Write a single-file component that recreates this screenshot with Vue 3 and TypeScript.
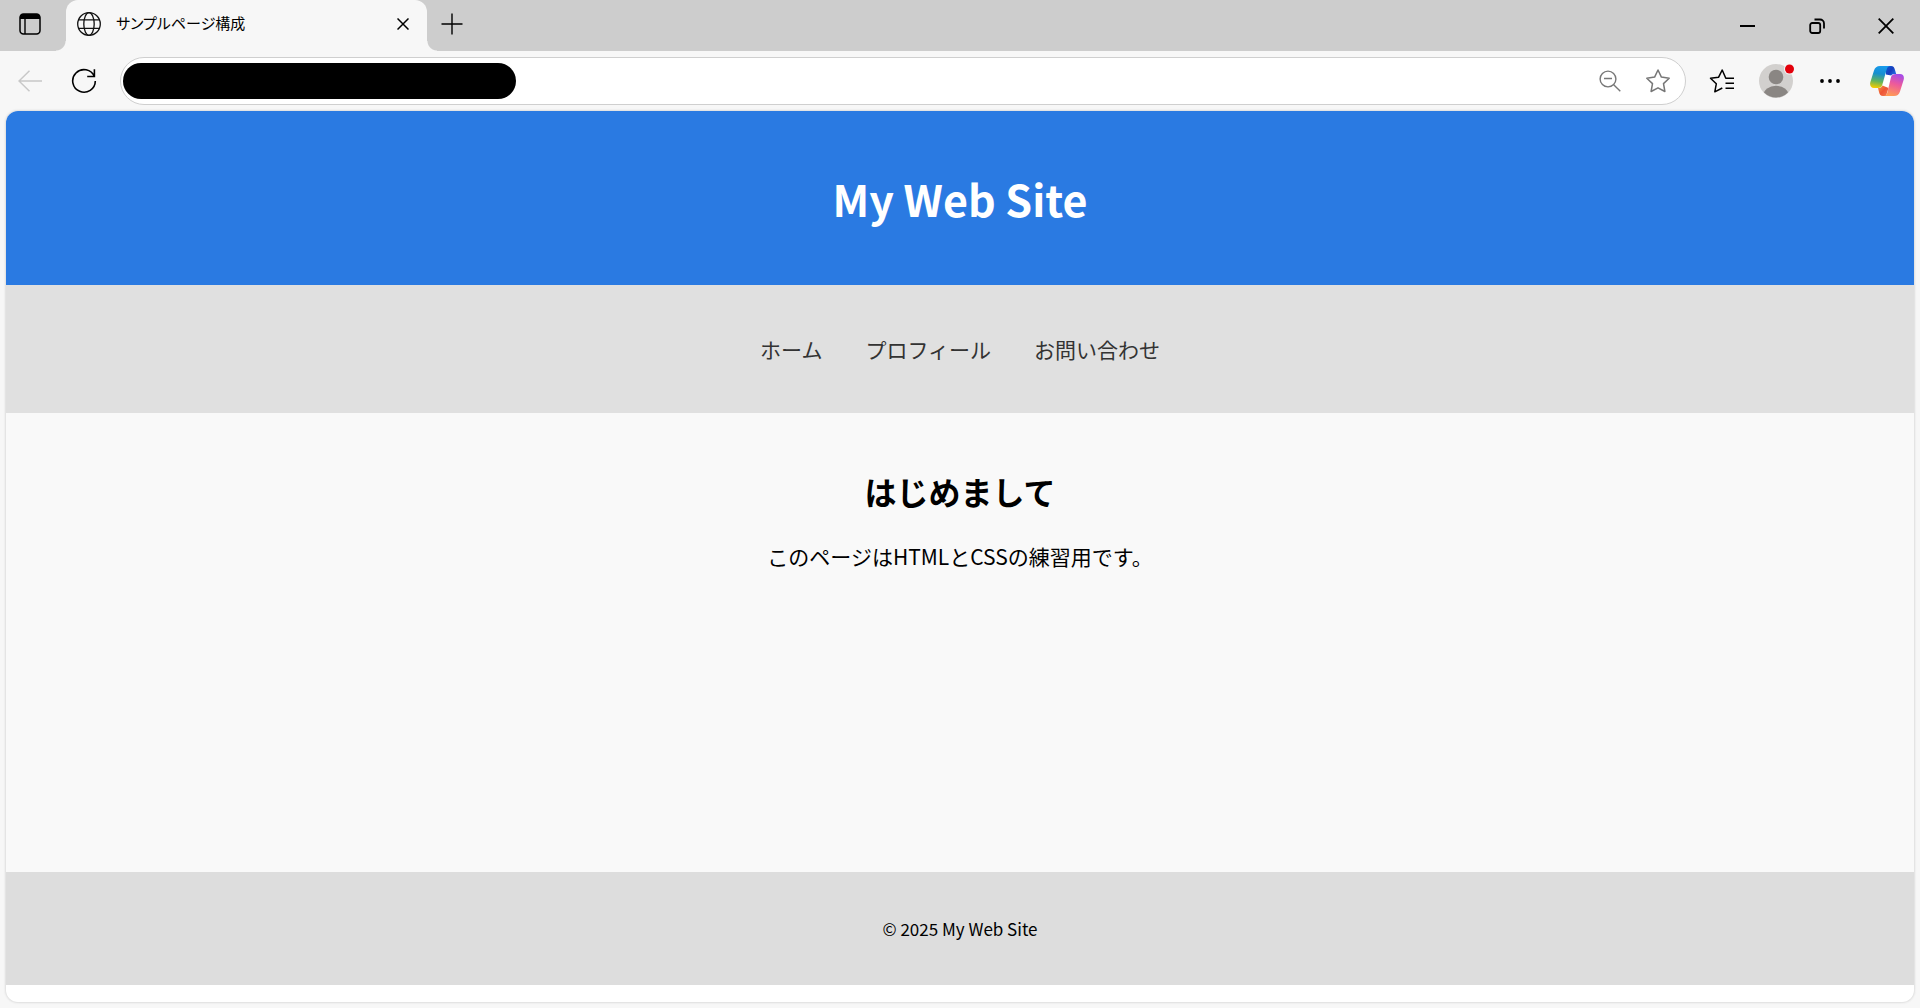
<script setup lang="ts">
import { ref } from 'vue'

interface NavItem {
  label: string
  href: string
}

const tabTitle = 'サンプルページ構成'
const siteName = 'My Web Site'
const address = ref('')
const navItems: NavItem[] = [
  { label: 'ホーム', href: '#home' },
  { label: 'プロフィール', href: '#profile' },
  { label: 'お問い合わせ', href: '#contact' },
]
</script>

<template>
  <div class="window">
    <div class="tab-strip">
      <button class="tab-actions" type="button" aria-label="タブ操作メニュー">
        <svg width="22" height="22" viewBox="0 0 22 22">
          <rect x="1" y="1" width="20" height="20" rx="3.5" fill="none" stroke="#000" stroke-width="1.5" />
          <path d="M1 6V4a3 3 0 0 1 3-3h14a3 3 0 0 1 3 3v2z" />
          <path d="M6 6v15" stroke="#000" stroke-width="1.4" />
        </svg>
      </button>
      <div class="tab">
        <svg class="globe" width="24" height="24" viewBox="0 0 24 24" fill="none" stroke="#111" stroke-width="1.3">
          <circle cx="12" cy="12" r="11.3" />
          <ellipse cx="12" cy="12" rx="5.2" ry="11.3" />
          <path d="M1.6 7.8h20.8M1.6 16.4h20.8" />
        </svg>
        <span class="tab-title">{{ tabTitle }}</span>
        <button class="tab-close" type="button" aria-label="タブを閉じる">
          <svg width="12" height="12" viewBox="0 0 12 12" stroke="#000" stroke-width="1.5">
            <path d="M0.5 0.5l11 11M11.5 0.5l-11 11" />
          </svg>
        </button>
      </div>
      <button class="new-tab" type="button" aria-label="新しいタブ">
        <svg width="22" height="22" viewBox="0 0 22 22" stroke="#000" stroke-width="1.4">
          <path d="M11 0.5v21M0.5 11h21" />
        </svg>
      </button>
      <div class="window-controls">
        <button type="button" aria-label="最小化">
          <svg width="15" height="16" viewBox="0 0 15 16"><path d="M0 8h15" stroke="#000" stroke-width="2" /></svg>
        </button>
        <button type="button" aria-label="元に戻す">
          <svg width="16" height="16" viewBox="0 0 16 16" fill="none" stroke="#000" stroke-width="1.8">
            <rect x="1.2" y="5" width="10" height="10" rx="2" />
            <path d="M5.5 1.5h5.5a4 4 0 0 1 4 4v5" />
          </svg>
        </button>
        <button type="button" aria-label="閉じる">
          <svg width="16" height="16" viewBox="0 0 16 16" stroke="#000" stroke-width="1.8">
            <path d="M0.7 0.7l14.6 14.6M15.3 0.7L0.7 15.3" />
          </svg>
        </button>
      </div>
    </div>

    <div class="toolbar">
      <button class="tool" type="button" aria-label="戻る" disabled>
        <svg width="24" height="22" viewBox="0 0 24 22" fill="none" stroke="#c8c8c8" stroke-width="1.5">
          <path d="M24 11H1M11.5 0.8L1 11l10.5 10.2" />
        </svg>
      </button>
      <button class="tool" type="button" aria-label="更新">
        <svg width="26" height="26" viewBox="0 0 26 26" fill="none" stroke="#000" stroke-width="1.6">
          <path d="M23.4 8.5A11.3 11.3 0 1 0 24.3 13M23.4 1.3v7.2h-7.2" />
        </svg>
      </button>
      <form class="address-bar" @submit.prevent>
        <span class="address-mask"></span>
        <input v-model="address" class="address-input" type="text" aria-label="アドレス" />
        <button class="tool" type="button" aria-label="ズーム">
          <svg width="22" height="22" viewBox="0 0 22 22" fill="none" stroke="#777" stroke-width="1.4">
            <circle cx="9" cy="9" r="7.9" />
            <path d="M5 8.5h8M14.7 14.7l6.6 6.6" />
          </svg>
        </button>
        <button class="tool" type="button" aria-label="お気に入りに追加">
          <svg width="26" height="26" viewBox="0 0 26 26" fill="none" stroke="#777" stroke-width="1.5" stroke-linejoin="round">
            <path d="M13 2l3.4 7.1 7.8 1.1-5.7 5.4 1.4 7.9L13 19.8l-6.9 3.7 1.4-7.9-5.7-5.4 7.8-1.1z" />
          </svg>
        </button>
      </form>
      <button class="tool" type="button" aria-label="お気に入り">
        <svg width="26" height="26" viewBox="0 0 26 26" fill="none" stroke="#000" stroke-width="1.5" stroke-linejoin="round">
          <path d="M25 10.2h-8.2L13.2 2 9.5 9.3 1.5 10.2l5.8 5.6-1.5 8 7.5-3.8M16.5 15.2H25M16.5 20.2H25" />
        </svg>
      </button>
      <button class="tool" type="button" aria-label="プロフィール">
        <svg width="36" height="36" viewBox="0 0 36 36">
          <defs><clipPath id="avatar"><circle cx="18" cy="18" r="16.5" /></clipPath></defs>
          <circle cx="18" cy="18" r="17" fill="#d2d0ce" />
          <g clip-path="url(#avatar)" fill="#8a8683">
            <circle cx="18" cy="14" r="7.3" />
            <ellipse cx="18" cy="32" rx="12.5" ry="9.2" />
          </g>
          <circle cx="31.5" cy="6" r="5.5" fill="#f7f7f7" />
          <circle cx="31.5" cy="6" r="4.5" fill="#e3000b" />
        </svg>
      </button>
      <button class="tool" type="button" aria-label="設定など">
        <svg width="20" height="6" viewBox="0 0 20 6">
          <circle cx="2" cy="3" r="1.9" /><circle cx="10" cy="3" r="1.9" /><circle cx="18" cy="3" r="1.9" />
        </svg>
      </button>
      <button class="tool copilot" type="button" aria-label="Copilot">
        <svg width="34" height="30" viewBox="0 0 34 30">
          <defs>
            <linearGradient id="cool" x1="0.5" y1="0" x2="0.35" y2="1">
              <stop offset="0" stop-color="#189bec" /><stop offset="0.35" stop-color="#168fd0" />
              <stop offset="0.7" stop-color="#63b45c" /><stop offset="1" stop-color="#f2cb00" />
            </linearGradient>
            <linearGradient id="warm" x1="0.7" y1="0" x2="0.4" y2="1">
              <stop offset="0" stop-color="#a64be8" /><stop offset="0.45" stop-color="#ed5a9b" />
              <stop offset="1" stop-color="#ff9b55" />
            </linearGradient>
            <linearGradient id="navy" x1="0" y1="0" x2="1" y2="0.6">
              <stop offset="0" stop-color="#0b62da" /><stop offset="0.6" stop-color="#173ebd" />
              <stop offset="1" stop-color="#2367df" />
            </linearGradient>
            <linearGradient id="ember" x1="0" y1="0" x2="1" y2="1">
              <stop offset="0" stop-color="#f59a42" /><stop offset="0.5" stop-color="#ee5535" />
              <stop offset="1" stop-color="#f47955" />
            </linearGradient>
          </defs>
          <path d="M16 8h8l-6 14h-6z" fill="#fff" />
          <path d="M15 0h6c2.6 0 3.3 1.5 4 4l1.2 4c-3 0-4.200.3-5 1.5L16 8.500z" fill="url(#navy)" />
          <path d="M8 22c2.500 0 3.700-.6 4.500-2.500L18.500 22 16 30h-3c-2.500 0-3.300-1.500-4-4z" fill="url(#ember)" />
          <path d="M10 0h11c-3 0-3.800 1.500-4.500 4l-4.300 15c-.7 2.200-2 3-4.200 3H4c-3.200 0-4.600-2.500-3.600-6L4 4.500C5 1.500 6.800 0 10 0z" fill="url(#cool)" />
          <path d="M24 30H13c3 0 3.800-1.500 4.500-4l3.300-14c.7-3 2-4 5.200-4h4c3.200 0 4.600 2.500 3.600 6L30 25.500C29 28.500 27.200 30 24 30z" fill="url(#warm)" />
        </svg>
      </button>
    </div>

    <div class="page">
      <header class="site-header">
        <h1>{{ siteName }}</h1>
      </header>
      <nav class="site-nav">
        <a v-for="item in navItems" :key="item.href" :href="item.href">{{ item.label }}</a>
      </nav>
      <main class="site-main">
        <h2>はじめまして</h2>
        <p>このページはHTMLとCSSの練習用です。</p>
      </main>
      <footer class="site-footer">© 2025 {{ siteName }}</footer>
    </div>
  </div>
</template>

<style>
body {
  margin: 0;
}
</style>

<style scoped>
.window {
  display: flex;
  flex-direction: column;
  box-sizing: border-box;
  min-height: 100vh;
  background: #f7f7f7;
  color: #000;
  font-family: "Noto Sans CJK JP", "Noto Sans", sans-serif;
}

button {
  display: flex;
  align-items: center;
  justify-content: center;
  flex: none;
  padding: 0;
  border: 0;
  background: none;
}

svg {
  display: block;
  flex: none;
}

.tab-strip {
  display: flex;
  height: 51px;
  background: #cdcdcd;
}

.tab-actions {
  width: 60px;
  height: 48px;
  margin-right: 6px;
}

.tab {
  position: relative;
  display: flex;
  align-items: center;
  box-sizing: border-box;
  width: 361px;
  padding: 0 12px 3px 11px;
  border-radius: 12px 12px 0 0;
  background: #f7f7f7;
}

.tab::before,
.tab::after {
  content: "";
  position: absolute;
  bottom: 0;
  width: 10px;
  height: 10px;
}

.tab::before {
  right: 100%;
  background: radial-gradient(circle at 0 0, transparent 9px, #f7f7f7 10px);
}

.tab::after {
  left: 100%;
  background: radial-gradient(circle at 100% 0, transparent 9px, #f7f7f7 10px);
}

.tab-title {
  flex: 1;
  margin-left: 15px;
  padding-bottom: 2px;
  font-size: 15px;
  line-height: 24px;
  font-feature-settings: "palt";
  white-space: nowrap;
}

.tab-close {
  width: 24px;
  height: 24px;
}

.new-tab {
  width: 50px;
  height: 47px;
}

.window-controls {
  display: flex;
  margin-left: auto;
}

.window-controls button {
  width: 69px;
}

.toolbar {
  display: flex;
  align-items: center;
  gap: 18px;
  padding: 6px 12px;
}

.tool {
  width: 36px;
  height: 36px;
}

.copilot {
  width: 42px;
}

.address-bar {
  display: flex;
  flex: 1;
  align-items: center;
  gap: 12px;
  box-sizing: border-box;
  height: 48px;
  min-width: 0;
  padding: 0 9px 0 2px;
  border: 1px solid #cfcfcf;
  border-radius: 24px;
  background: #fff;
}

.address-mask {
  flex: none;
  width: 393px;
  height: 36px;
  border-radius: 18px;
  background: #000;
}

.address-input {
  flex: 1;
  min-width: 0;
  padding: 0;
  border: 0;
  outline: 0;
  background: none;
  font: inherit;
}

.page {
  display: flex;
  flex: 1;
  flex-direction: column;
  margin: 0 6px 6px;
  padding-bottom: 17px;
  overflow: hidden;
  border-radius: 12px;
  background: #fff;
  box-shadow: 0 0 2px 1px #dedede;
}

.site-header {
  padding: 52px 0;
  background: #2a7ae2;
  color: #fff;
  text-align: center;
}

h1 {
  margin: 0;
  font-size: 43px;
  line-height: 70px;
}

.site-nav {
  display: flex;
  justify-content: center;
  gap: 43px;
  padding: 48px 0;
  background: #e0e0e0;
}

.site-nav a {
  color: #333;
  font-size: 21px;
  line-height: 32px;
  text-decoration: none;
}

.site-main {
  flex: 1;
  padding: 54px 0;
  background: #f9f9f9;
  text-align: center;
}

h2 {
  margin: 0 0 25px;
  font-size: 32px;
  line-height: 48px;
}

p {
  margin: 0;
  font-size: 21px;
  line-height: 32px;
}

.site-footer {
  padding: 44px 0;
  background: #ddd;
  font-size: 17px;
  line-height: 25px;
  text-align: center;
}
</style>
